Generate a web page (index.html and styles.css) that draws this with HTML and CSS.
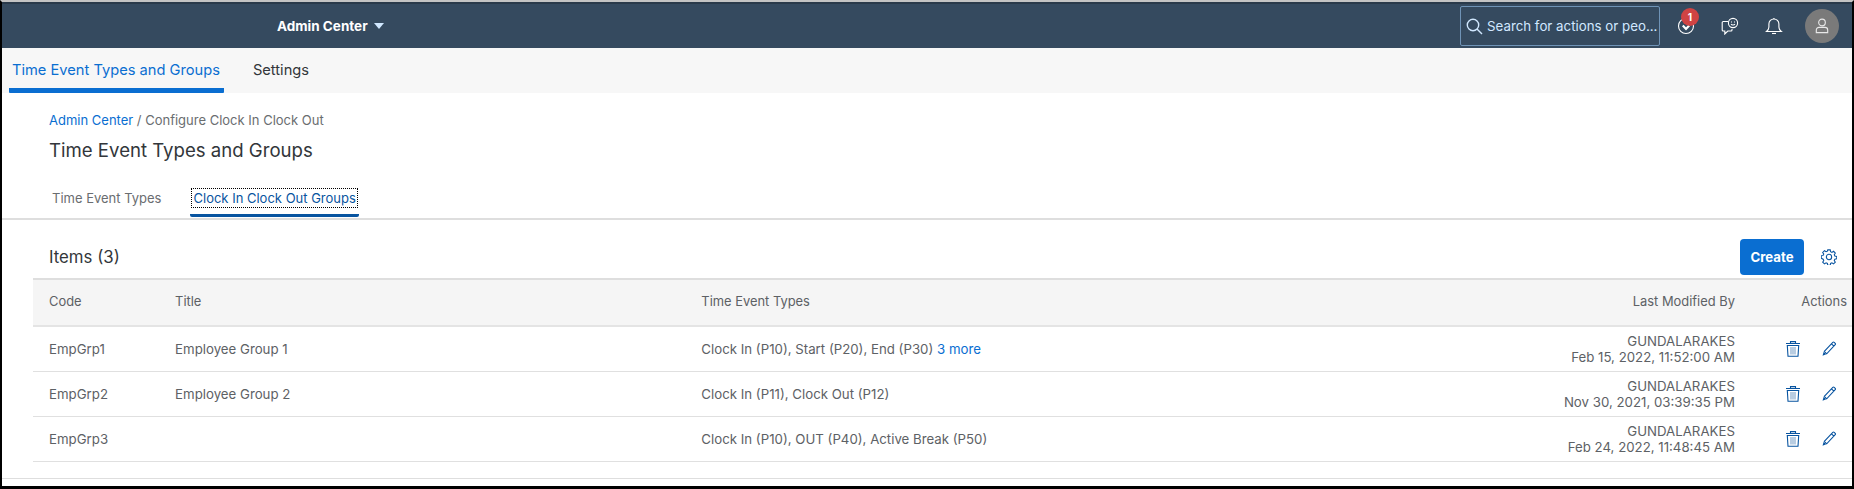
FILE: index.html
```html
<!DOCTYPE html>
<html lang="en">
<head>
<meta charset="utf-8">
<title>Time Event Types and Groups</title>
<link rel="stylesheet" href="styles.css">
</head>
<body>
<div class="frame">
  <header class="shell">
    <div class="shell-title">Admin Center <svg class="caret" viewBox="0 0 10 6" width="10" height="6"><path d="M0 0h10L5 6z"/></svg></div>
    <div class="shell-tools">
      <div class="search">
        <svg class="ico-search" viewBox="0 0 17 17" width="17" height="17"><circle cx="7" cy="7" r="5.7"/><path d="M11 11l5 5"/></svg>
        <span class="search-text">Search for actions or peo...</span>
      </div>
      <div class="tool tool-todo">
        <svg viewBox="0 0 18 18" width="18" height="18"><circle cx="9" cy="9" r="7.5"/><path d="M5.8 8.6L9 12l3.2-3.4" class="thick"/></svg>
        <span class="badge">1</span>
      </div>
      <div class="tool">
        <svg viewBox="0 0 18 18" width="18" height="18"><path d="M7 4.5H2.2a1 1 0 0 0-1 1V13a1 1 0 0 0 1 1h1.6v3l3-3H10a1 1 0 0 0 1-1v-1"/><circle cx="12" cy="6" r="4.6"/><path d="M10 5h1M13 5h1M10 7.2c1 1 3 1 4 0"/></svg>
      </div>
      <div class="tool">
        <svg viewBox="0 0 18 18" width="18" height="18"><path d="M1.5 14.5c1.5-1.2 2.4-2 2.4-4.5V7a5 5 0 0 1 10 0v3c0 2.500.9 3.300 2.400 4.500z"/><path d="M7 16.500h4"/><path d="M8.900 1v1"/></svg>
      </div>
      <div class="avatar">
        <svg viewBox="0 0 16 18" width="14" height="16"><circle cx="8" cy="5" r="3.800"/><path d="M1.500 16.500v-3a3 3 0 0 1 3-3h7a3 3 0 0 1 3 3v3z"/></svg>
      </div>
    </div>
  </header>

  <nav class="topnav">
    <a class="topnav-item is-active">Time Event Types and Groups</a>
    <a class="topnav-item">Settings</a>
  </nav>

  <section class="page-head">
    <div class="crumbs"><a class="link">Admin Center</a> / Configure Clock In Clock Out</div>
    <h1 class="page-title">Time Event Types and Groups</h1>
    <div class="subtabs">
      <a class="subtab">Time Event Types</a>
      <a class="subtab is-current"><span class="focus">Clock In Clock Out Groups</span></a>
    </div>
  </section>

  <section class="content">
    <div class="toolbar">
      <h2 class="items-title">Items (3)</h2>
      <button class="btn-create">Create</button>
      <svg class="ico-gear" viewBox="0 0 18 18" width="16" height="16"><path d="M7.600 1h2.800l.4 2.100 1.500.7 1.800-1.200 2 2-1.200 1.800.7 1.500 2.100.4v2.800l-2.100.4-.7 1.500 1.200 1.800-2 2-1.800-1.200-1.500.7-.4 2.100H7.600l-.4-2.100-1.500-.7-1.800 1.200-2-2 1.200-1.800-.7-1.500L.3 10.400V7.600l2.100-.4.7-1.500L1.900 3.900l2-2 1.800 1.200 1.500-.7z"/><circle cx="9" cy="9" r="3"/></svg>
    </div>
    <table class="grid">
      <colgroup>
        <col class="c-code"><col class="c-title"><col class="c-types"><col class="c-mod"><col class="c-act">
      </colgroup>
      <thead>
        <tr>
          <th>Code</th><th>Title</th><th>Time Event Types</th><th class="right">Last Modified By</th><th class="right act-h">Actions</th>
        </tr>
      </thead>
      <tbody>
        <tr>
          <td>EmpGrp1</td><td>Employee Group 1</td><td>Clock In (P10), Start (P20), End (P30) <a class="more">3 more</a></td>
          <td class="right mod">GUNDALARAKES<br>Feb 15, 2022, 11:52:00 AM</td>
          <td class="acts">
            <div class="acts-in">
              <svg class="ico-act" viewBox="0 0 14 16" width="14" height="16"><path d="M0 2.500h14M4.500 2.300V.6h5v1.700M1.300 4.500l.7 10.800h10l.7-10.800z"/><path class="soft" d="M5 6v7.500M7 6v7.500M9 6v7.500"/></svg>
              <svg class="ico-act" viewBox="0 0 14 16" width="14" height="16"><path d="M2.300 10.300L10.800 1.300a1 1 0 0 1 1.400 0l1 1a1 1 0 0 1 0 1.400L4.700 12.800zM9.500 2.800l2.400 2.400"/><path class="nib" d="M1.700 10.700l2.600 2.600-3.800 1.400z"/></svg>
            </div>
          </td>
        </tr>
        <tr>
          <td>EmpGrp2</td><td>Employee Group 2</td><td>Clock In (P11), Clock Out (P12)</td>
          <td class="right mod">GUNDALARAKES<br>Nov 30, 2021, 03:39:35 PM</td>
          <td class="acts">
            <div class="acts-in">
              <svg class="ico-act" viewBox="0 0 14 16" width="14" height="16"><path d="M0 2.500h14M4.500 2.300V.6h5v1.700M1.300 4.500l.7 10.800h10l.7-10.800z"/><path class="soft" d="M5 6v7.500M7 6v7.500M9 6v7.500"/></svg>
              <svg class="ico-act" viewBox="0 0 14 16" width="14" height="16"><path d="M2.300 10.300L10.800 1.300a1 1 0 0 1 1.400 0l1 1a1 1 0 0 1 0 1.400L4.700 12.800zM9.500 2.800l2.400 2.400"/><path class="nib" d="M1.700 10.700l2.600 2.600-3.800 1.400z"/></svg>
            </div>
          </td>
        </tr>
        <tr>
          <td>EmpGrp3</td><td></td><td>Clock In (P10), OUT (P40), Active Break (P50)</td>
          <td class="right mod">GUNDALARAKES<br>Feb 24, 2022, 11:48:45 AM</td>
          <td class="acts">
            <div class="acts-in">
              <svg class="ico-act" viewBox="0 0 14 16" width="14" height="16"><path d="M0 2.500h14M4.500 2.300V.6h5v1.700M1.300 4.500l.7 10.800h10l.7-10.800z"/><path class="soft" d="M5 6v7.500M7 6v7.500M9 6v7.500"/></svg>
              <svg class="ico-act" viewBox="0 0 14 16" width="14" height="16"><path d="M2.300 10.300L10.800 1.300a1 1 0 0 1 1.400 0l1 1a1 1 0 0 1 0 1.400L4.700 12.800zM9.500 2.800l2.400 2.400"/><path class="nib" d="M1.700 10.700l2.600 2.600-3.800 1.400z"/></svg>
            </div>
          </td>
        </tr>
      </tbody>
    </table>
    <div class="foot-line"></div>
  </section>
</div>
</body>
</html>
```

FILE: styles.css
```css
* { box-sizing: border-box; }
html, body { margin: 0; padding: 0; background: #fff; }
body { font-family: Inter, "Noto Sans", Arial, sans-serif; color: #32363a; overflow: hidden; }
.frame {
  width: 1854px;
  height: 489px;
  border-top: 2px solid #c4c4c4;
  border-left: 2px solid #000;
  border-right: 2px solid #000;
  border-bottom: 3px solid #000;
  display: flex;
  flex-direction: column;
  overflow: hidden;
}
.shell {
  height: 46px;
  flex: none;
  background: #354a5f;
  border-top: 2px solid #2a3a4a;
  display: flex;
  align-items: center;
  padding-left: 275px;
}
.shell-title { color: #fff; font-weight: 700; font-size: 13.500px; display: flex; align-items: center; gap: 6px; }
.caret path { fill: #d1e8ff; }
.shell-tools { margin-left: auto; display: flex; align-items: center; height: 100%; }
.search {
  width: 200px;
  height: 40px;
  border: 1px solid #6f93b6;
  border-radius: 2px;
  display: flex;
  align-items: center;
  padding-left: 5px;
  gap: 4px;
  margin-right: 17px;
}
.ico-search { fill: none; stroke: #d1e8ff; stroke-width: 1.4; }
.search-text { color: #d1e8ff; font-size: 13.300px; white-space: nowrap; }
.tool { width: 18px; height: 18px; margin-right: 26px; position: relative; }
.tool svg { fill: none; stroke: #fff; stroke-width: 1.1; display: block; }
.tool svg .thick { stroke-width: 2.200; }
.badge {
  position: absolute;
  left: 4px;
  top: -9px;
  width: 18px;
  height: 18px;
  border-radius: 50%;
  background: #d04343;
  color: #fff;
  font-size: 10px;
  font-weight: 700;
  display: flex;
  align-items: center;
  justify-content: center;
}
.avatar {
  width: 34px;
  height: 34px;
  border-radius: 50%;
  background: #7a7a7a;
  display: flex;
  align-items: center;
  justify-content: center;
  margin-right: 13px;
  margin-left: -4px;
}
.avatar svg { fill: none; stroke: #e8e8e8; stroke-width: 1.300; }
.topnav {
  height: 45px;
  flex: none;
  background: #f7f7f7;
  display: flex;
  padding-left: 7px;
  gap: 18px;
}
.topnav-item {
  padding: 0 4px 0 3px;
  font-size: 14.660px;
  line-height: 44px;
  height: 45px;
  color: #32363a;
}
.topnav-item:last-child { padding: 0 11px; }
.topnav-item.is-active { color: #0a6ed1; border-bottom: 5px solid #0a6ed1; border-radius: 0 0 1px 1px; }
.page-head {
  height: 127px;
  flex: none;
  padding: 17px 0 0 47px;
  border-bottom: 2px solid #dedede;
}
.crumbs { font-size: 13px; line-height: 20px; color: #6a6d70; }
.link { color: #0a6ed1; }
.page-title { margin: 7px 0 0; font-size: 18.600px; font-weight: 400; line-height: 26px; color: #32363a; }
.subtabs { display: flex; margin: 18px 0 0 -6px; height: 36px; gap: 20px; }
.subtab { font-size: 13px; line-height: 18px; padding: 8px 9px 0; color: #6a6d70; height: 36px; }
.subtab.is-current { color: #0854a0; border-bottom: 3px solid #0854a0; border-radius: 2px; padding: 8px 2px 0; margin-left: 0; }
.focus { display: block; outline: 1px dotted #000; padding: 0 1px; }
.content { flex: 1; padding-left: 31px; position: relative; }
.toolbar { height: 58px; display: flex; align-items: center; padding-left: 16px; padding-top: 16px; }
.items-title { margin: 0; font-size: 16.800px; font-weight: 400; color: #32363a; }
.btn-create {
  margin-left: auto;
  width: 64px;
  height: 36px;
  background: #0a6ed1;
  color: #fff;
  border: 0;
  border-radius: 4px;
  font-family: inherit;
  font-size: 13.200px;
  font-weight: 700;
}
.ico-gear { margin: 0 15px 0 17px; fill: none; stroke: #0854a0; stroke-width: 1.200; }
.grid { width: 100%; border-collapse: collapse; table-layout: fixed; font-size: 13.250px; }
.c-code { width: 126px; }
.c-title { width: 526px; }
.c-types { width: 799px; }
.c-mod { width: 250px; }
.c-act { width: 117px; }
.grid th {
  background: #f5f5f5;
  height: 47px;
  font-size: 12.900px;
  font-weight: 400;
  text-align: left;
  padding: 0 0 2px 16px;
  color: #5d6165;
  border-top: 2px solid #dedede;
  border-bottom: 2px solid #e4e4e4;
}
.grid td {
  height: 45px;
  padding: 0 0 0 16px;
  color: #5d6165;
  border-bottom: 1px solid #e0e0e0;
  line-height: 16px;
}
.grid th.right, .grid td.right { text-align: right; padding-left: 0; padding-right: 0; }
.grid th.act-h { padding-right: 5px; }
.more { color: #0a6ed1; }
.grid td.acts { padding: 0 16px 0 0; }
.acts-in { display: flex; justify-content: flex-end; gap: 22px; }
.ico-act { fill: none; stroke: #0854a0; stroke-width: 1.100; display: block; }
.ico-act .soft { stroke: #7fa3c8; }
.ico-act .nib { fill: #0854a0; stroke: none; }
.foot-line {
  position: absolute;
  left: 0;
  right: 0;
  top: 258px;
  height: 1px;
  background: #dedede;
}
```
